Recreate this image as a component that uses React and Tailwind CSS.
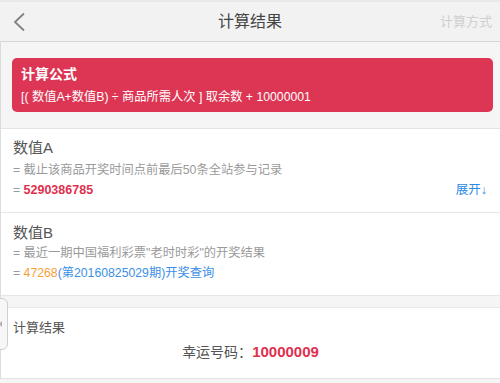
export default function App() {
  const font = { fontFamily: '"Liberation Sans", "Noto Sans CJK SC", sans-serif' };
  return (
    <div className="relative w-[500px] h-[383px] overflow-hidden bg-[#f5f5f5]" style={font}>
      <div className="h-[42px] bg-[#f2f2f2] border-t-2 border-[#e8e8e8] border-b border-b-[#d6d6d6] grid grid-cols-[1fr_auto_1fr] items-center">
        <div className="pl-[12px] flex items-center">
          <svg width="14" height="20" viewBox="0 0 14 20">
            <path d="M12 1.5 L3 10 L12 18.5" fill="none" stroke="#808080" strokeWidth="1.8" />
          </svg>
        </div>
        <div className="text-[16px] text-[#444] leading-[20px]">计算结果</div>
        <div className="text-[13px] text-[#cfcfcf] pr-[8px] leading-[20px] text-right">计算方式</div>
      </div>
      <div className="border-l border-[#dcdcdc]">
        <div className="pt-[16px] pb-[16px] border-b border-[#e4e4e4]">
          <div className="ml-[11px] mr-[7px] h-[54px] rounded-[5px] bg-[#dc3654] text-white px-[9px] pt-[6px]">
            <div className="text-[14px] font-bold leading-[20px]">计算公式</div>
            <div className="text-[12.25px] leading-[20px] mt-[3px]">[( 数值A+数值B) ÷ 商品所需人次 ] 取余数 + 10000001</div>
          </div>
        </div>
        <div className="bg-white px-[12px] pt-[9px] pb-[12px] border-b border-[#e6e6e6]">
          <div className="text-[15px] text-[#555] leading-[20px]">数值A</div>
          <div className="text-[12.25px] text-[#9a9a9a] leading-[20px] mt-[2px]">= 截止该商品开奖时间点前最后50条全站参与记录</div>
          <div className="flex justify-between items-center leading-[20px]">
            <div className="text-[12.25px] text-[#9a9a9a]">= <span className="text-[12.5px] text-[#e0304e] font-bold">5290386785</span></div>
            <div className="text-[12.5px] text-[#2a8ae6] pr-[1px]">展开<span className="font-bold">↓</span></div>
          </div>
        </div>
        <div className="bg-white px-[12px] pt-[10px] pb-[12px] border-b border-[#e6e6e6]">
          <div className="text-[15px] text-[#555] leading-[20px]">数值B</div>
          <div className="text-[12.25px] text-[#9a9a9a] leading-[20px]">= 最近一期中国福利彩票"老时时彩"的开奖结果</div>
          <div className="text-[12.25px] text-[#9a9a9a] leading-[20px]">= <span className="text-[#f5a03a]">47268</span><span className="text-[#3b8fe6]">(第20160825029期)开奖查询</span></div>
        </div>
        <div className="h-[11px]" />
        <div className="bg-white border-t border-[#e8e8e8] border-b border-b-[#e4e4e4] px-[12px] pt-[10px] pb-[16px]">
          <div className="text-[13px] text-[#555] leading-[20px]">计算结果</div>
          <div className="text-center leading-[20px] mt-[4px] text-[14px] text-[#555]">幸运号码：<span className="text-[15px] font-bold text-[#e0304e]">10000009</span></div>
        </div>
      </div>
      <div className="absolute left-[-4px] top-[298px] w-[12px] h-[52px] rounded-r-[6px] border border-[#cfcfcf] bg-[#f7f7f7] flex items-center justify-end pr-[5px]">
        <div className="w-0 h-0 border-y-[3px] border-y-transparent border-r-[3px] border-r-[#b0b0b0]" />
      </div>
    </div>
  );
}
